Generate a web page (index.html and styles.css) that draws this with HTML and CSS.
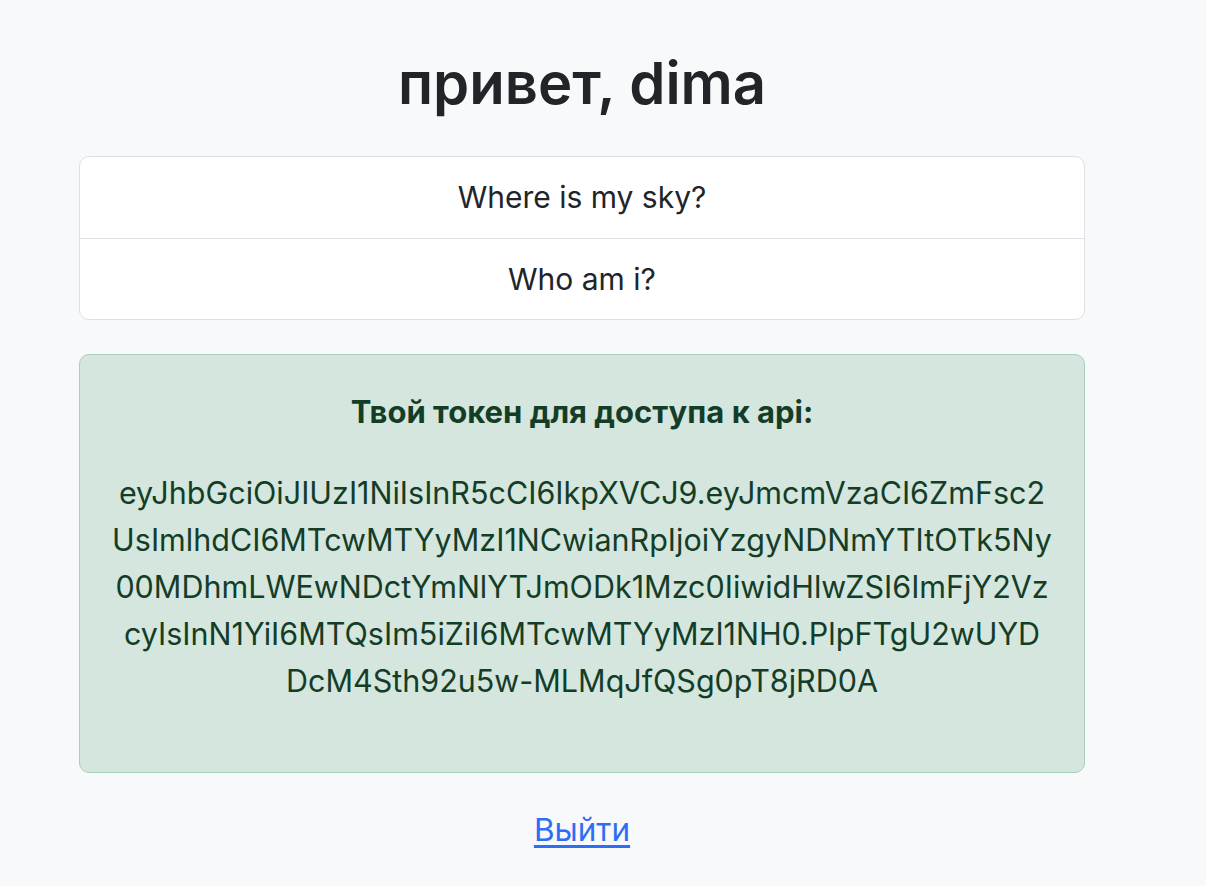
FILE: index.html
```html
<!DOCTYPE html>
<html lang="ru">
<head>
<meta charset="utf-8">
<title>привет, dima</title>
<link rel="stylesheet" href="styles.css">
</head>
<body>
<main class="page">
  <h1 class="title">привет, dima</h1>
  <ul class="list">
    <li class="list-item">Where is my sky?</li>
    <li class="list-item">Who am i?</li>
  </ul>
  <div class="alert">
    <p class="alert-title">Твой токен для доступа к api:</p>
    <p class="token">eyJhbGciOiJIUzI1NiIsInR5cCI6IkpXVCJ9.eyJmcmVzaCI6ZmFsc2<br>UsImlhdCI6MTcwMTYyMzI1NCwianRpIjoiYzgyNDNmYTItOTk5Ny<br>00MDhmLWEwNDctYmNlYTJmODk1Mzc0IiwidHlwZSI6ImFjY2Vz<br>cyIsInN1YiI6MTQsIm5iZiI6MTcwMTYyMzI1NH0.PlpFTgU2wUYD<br>DcM4Sth92u5w-MLMqJfQSg0pT8jRD0A</p>
  </div>
  <div class="logout"><a href="#" class="logout-link">Выйти</a></div>
</main>
</body>
</html>
```

FILE: styles.css
```css
html, body {
  margin: 0;
  padding: 0;
  background: #f8f9fa;
}
body {
  font-family: Inter, "Noto Sans", "DejaVu Sans", sans-serif;
  color: #212529;
  font-size: 30px;
  line-height: 42px;
}
.page {
  width: 1006px;
  margin-left: 79px;
  padding-top: 50px;
}
.title {
  margin: 0 0 39px;
  font-size: 58px;
  line-height: 67px;
  font-weight: 600;
  text-align: center;
}
.list {
  list-style: none;
  margin: 0;
  padding: 0;
  background: #fff;
  border: 1px solid #dde0e4;
  border-radius: 10px;
  overflow: hidden;
}
.list-item {
  padding: 20px 0;
  line-height: 41px;
  text-align: center;
}
.list-item + .list-item {
  border-top: 1px solid #dde0e4;
  padding-bottom: 19px;
}
.alert {
  margin-top: 34px;
  background: #d4e6dd;
  border: 1px solid #a8d0bd;
  border-radius: 10px;
  color: #143d28;
  padding: 36px 20px 38px;
  text-align: center;
}
.alert-title {
  margin: 0 0 36px;
  font-size: 31px;
  font-weight: 700;
}
.token {
  margin: 0 0 30px;
  font-size: 30.5px;
  line-height: 47px;
  white-space: nowrap;
}
.logout {
  margin-top: 36px;
  text-align: center;
}
.logout-link {
  font-size: 31.5px;
  color: #2f6ef4;
  text-decoration: underline;
  text-underline-offset: 4px;
}
```
